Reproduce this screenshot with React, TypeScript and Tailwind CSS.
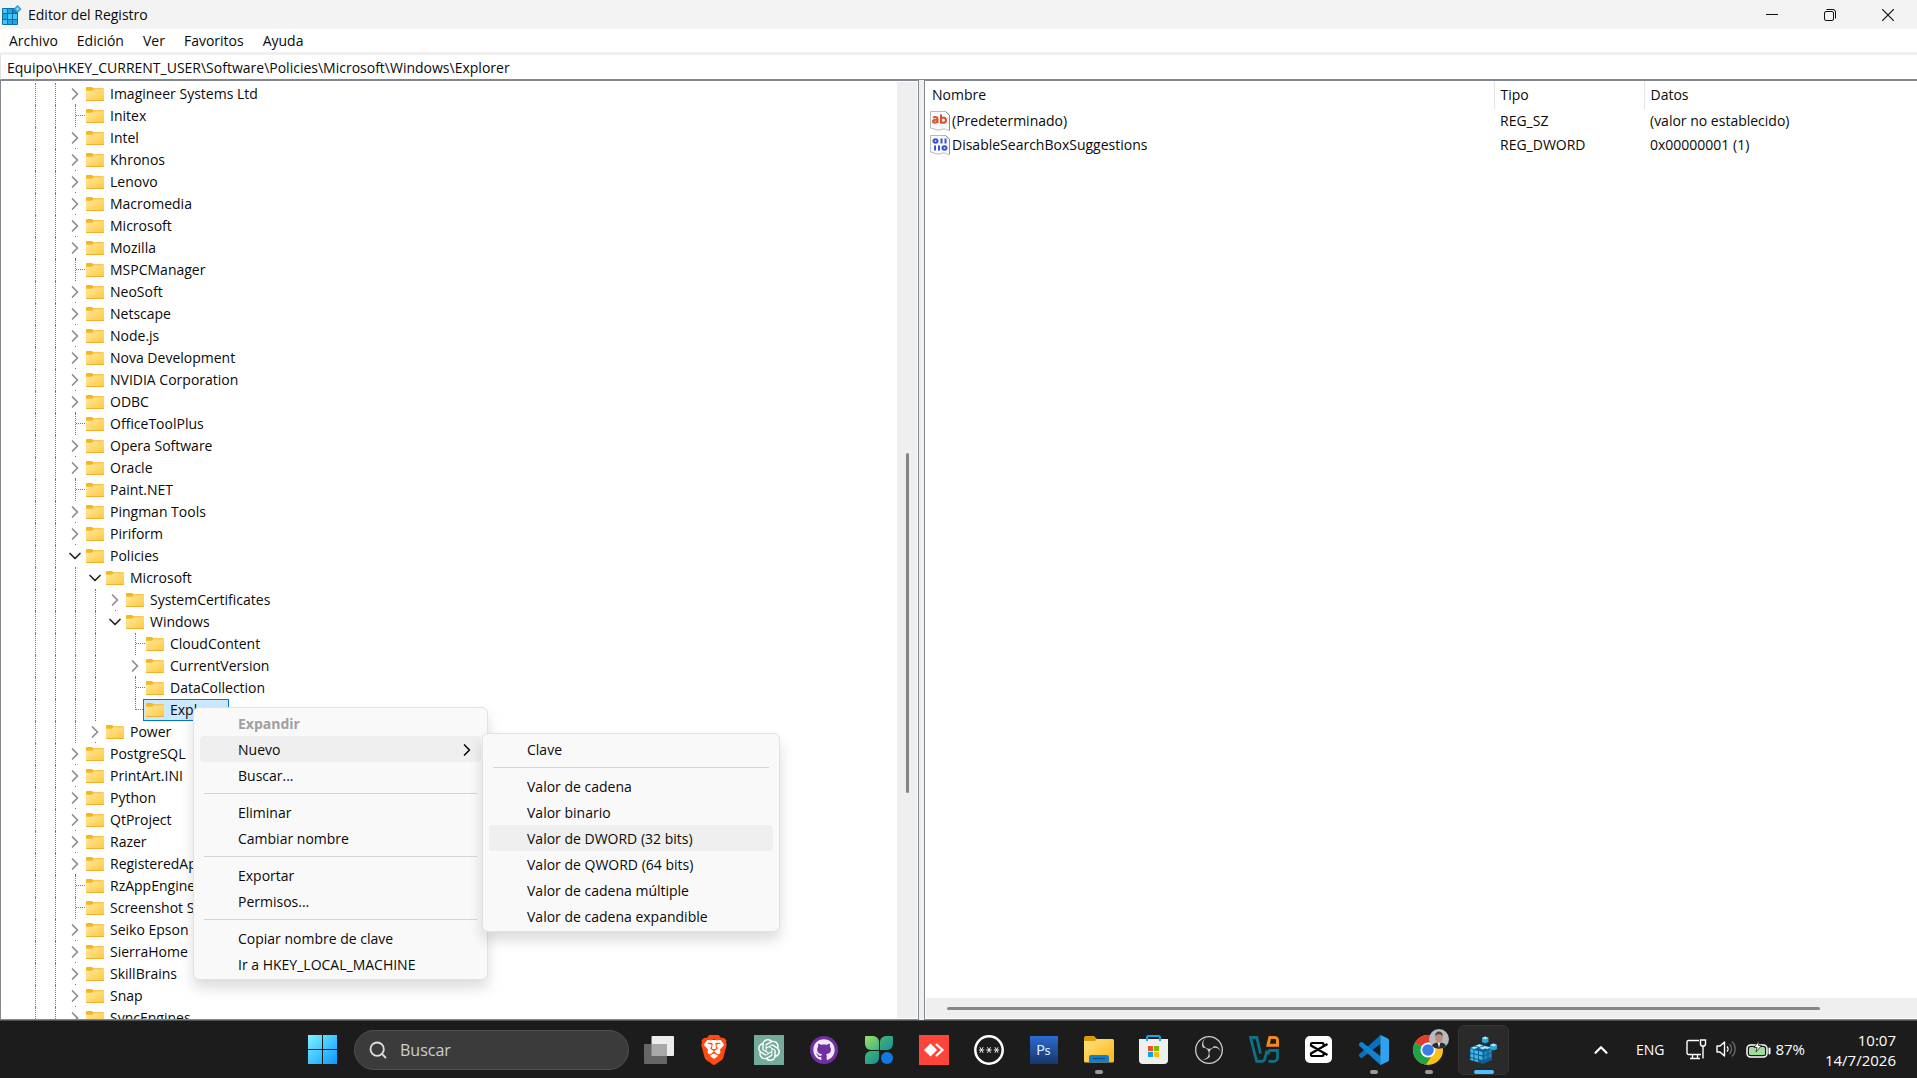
import { useState } from 'react';
import type { ReactNode } from 'react';
import { ChevronDown, ChevronRight, ChevronUp, Search } from 'lucide-react';
import { FaGithub } from 'react-icons/fa';
import { SiBrave, SiObsstudio, SiOpenai } from 'react-icons/si';

type TreeNode = { guides: string; name: string; selected?: boolean };

// guides: one character per indent column
//   | line, space nothing, > closed, v open, + leaf, L last leaf
const nodes: TreeNode[] = [
  { guides: '||>', name: 'Imagineer Systems Ltd' },
  { guides: '||+', name: 'Initex' },
  { guides: '||>', name: 'Intel' },
  { guides: '||>', name: 'Khronos' },
  { guides: '||>', name: 'Lenovo' },
  { guides: '||>', name: 'Macromedia' },
  { guides: '||>', name: 'Microsoft' },
  { guides: '||>', name: 'Mozilla' },
  { guides: '||+', name: 'MSPCManager' },
  { guides: '||>', name: 'NeoSoft' },
  { guides: '||>', name: 'Netscape' },
  { guides: '||>', name: 'Node.js' },
  { guides: '||>', name: 'Nova Development' },
  { guides: '||>', name: 'NVIDIA Corporation' },
  { guides: '||>', name: 'ODBC' },
  { guides: '||+', name: 'OfficeToolPlus' },
  { guides: '||>', name: 'Opera Software' },
  { guides: '||>', name: 'Oracle' },
  { guides: '||+', name: 'Paint.NET' },
  { guides: '||>', name: 'Pingman Tools' },
  { guides: '||>', name: 'Piriform' },
  { guides: '||v', name: 'Policies' },
  { guides: '|||v', name: 'Microsoft' },
  { guides: '||||>', name: 'SystemCertificates' },
  { guides: '||||v', name: 'Windows' },
  { guides: '|||| +', name: 'CloudContent' },
  { guides: '|||| >', name: 'CurrentVersion' },
  { guides: '|||| +', name: 'DataCollection' },
  { guides: '|||| L', name: 'Explorer', selected: true },
  { guides: '|||>', name: 'Power' },
  { guides: '||>', name: 'PostgreSQL' },
  { guides: '||>', name: 'PrintArt.INI' },
  { guides: '||>', name: 'Python' },
  { guides: '||>', name: 'QtProject' },
  { guides: '||>', name: 'Razer' },
  { guides: '||>', name: 'RegisteredApplications' },
  { guides: '||+', name: 'RzAppEngine' },
  { guides: '||+', name: 'Screenshot Studio' },
  { guides: '||>', name: 'Seiko Epson' },
  { guides: '||>', name: 'SierraHome' },
  { guides: '||>', name: 'SkillBrains' },
  { guides: '||>', name: 'Snap' },
  { guides: '||>', name: 'SyncEngines' },
];

const values = [
  { kind: 'string', name: '(Predeterminado)', type: 'REG_SZ', data: '(valor no establecido)' },
  { kind: 'binary', name: 'DisableSearchBoxSuggestions', type: 'REG_DWORD', data: '0x00000001 (1)' },
];

type MenuEntry = { label: string; bold?: boolean; active?: boolean; submenu?: boolean } | null;

const contextMenu: MenuEntry[] = [
  { label: 'Expandir', bold: true },
  { label: 'Nuevo', active: true, submenu: true },
  { label: 'Buscar...' },
  null,
  { label: 'Eliminar' },
  { label: 'Cambiar nombre' },
  null,
  { label: 'Exportar' },
  { label: 'Permisos...' },
  null,
  { label: 'Copiar nombre de clave' },
  { label: 'Ir a HKEY_LOCAL_MACHINE' },
];

const newMenu: MenuEntry[] = [
  { label: 'Clave' },
  null,
  { label: 'Valor de cadena' },
  { label: 'Valor binario' },
  { label: 'Valor de DWORD (32 bits)', active: true },
  { label: 'Valor de QWORD (64 bits)' },
  { label: 'Valor de cadena múltiple' },
  { label: 'Valor de cadena expandible' },
];

function FolderIcon() {
  return (
    <svg width="18" height="16" viewBox="0 0 18 16" className="shrink-0" aria-hidden="true">
      <defs>
        <linearGradient id="folder" x1="0" y1="0" x2="1" y2="1">
          <stop offset="0" stopColor="#ffe8a0" />
          <stop offset="1" stopColor="#ffc83c" />
        </linearGradient>
      </defs>
      <path d="M0 2a1 1 0 0 1 1-1h5l1.500 1.300H17a1 1 0 0 1 1 1V7H0z" fill="#f7b61c" />
      <path d="M0 4.800h6l1.500-1.500H18V14a1 1 0 0 1-1 1H1a1 1 0 0 1-1-1z" fill="url(#folder)" />
      <path d="M0 14h18a1 1 0 0 1-1 1H1a1 1 0 0 1-1-1z" fill="#efb02a" />
    </svg>
  );
}

function ValueIcon({ kind }: { kind: string }) {
  return (
    <svg width="20" height="20" viewBox="0 0 20 20" className="shrink-0" aria-hidden="true">
      <path d="M.5.5h15.500l3.500 3.500v15.500c-3 0-3-1.500-5.500-1.500s-3 1-6 1-3.500-1.500-7.500-2z" fill="#fafafa" stroke="#b9b9b9" />
      <path d="M15.500.5l4 4v14.500" fill="none" stroke="#8d8d8d" />
      {kind === 'string' ? (
        <g fill="none" stroke="#d9502e" strokeWidth="2">
          <path d="M3 6.500c3-1 4.500-.5 4.500 1.500v4M7.500 9c-3-.5-4.500 0-4.500 1.500s3.500 1.500 4.500 0" />
          <path d="M11 3.500v9M11 8c1-2 5-2 5 1.200S12 12.500 11 10.500" />
        </g>
      ) : (
        <g fill="none" stroke="#3553d8" strokeWidth="2">
          <ellipse cx="5.500" cy="6" rx="2" ry="1.700" />
          <path d="M11.500 3.500v5M15.500 3.500v5M5 10.500v5M9 10.500v5" />
          <ellipse cx="14.500" cy="13" rx="2" ry="1.700" />
        </g>
      )}
    </svg>
  );
}

function Guide({ kind }: { kind: string }) {
  if (kind === '>' || kind === 'v') {
    return (
      <span className="flex h-full w-5 flex-col">
        <button aria-label={kind === 'v' ? 'Contraer' : 'Expandir'} className="flex h-[21px] items-center">
          {kind === 'v' ? (
            <ChevronDown size={20} strokeWidth={2} className="text-[#222]" />
          ) : (
            <ChevronRight size={20} strokeWidth={2} className="text-[#8a8a8a]" />
          )}
        </button>
        {kind === '>' && <span className="ml-[10px] h-px w-px bg-[#777]" />}
      </span>
    );
  }
  return (
    <span className="flex h-full w-5 pl-[10px]">
      {kind !== ' ' && (
        <span className={`border-l border-dotted border-[#777] ${kind === 'L' ? 'h-1/2' : 'h-full'}`} />
      )}
      {(kind === '+' || kind === 'L') && (
        <span className="h-1/2 grow border-b border-dotted border-[#777]" />
      )}
    </span>
  );
}

function Tree() {
  return (
    <ul role="tree" aria-label="Claves" className="min-w-0 flex-1 overflow-hidden pt-[2px] pl-6">
      {nodes.map((node, i) => (
        <li key={i} role="treeitem" aria-selected={!!node.selected} className="flex h-[22px] items-center whitespace-nowrap">
          {node.guides.split('').map((kind, k) => (
            <Guide key={k} kind={kind} />
          ))}
          <span
            className={`flex h-full items-center gap-[6px] ${
              node.selected ? '-ml-[2px] border border-[#0078d7] bg-[#cce8ff] pr-[3px] pl-[2px]' : 'pl-px'
            }`}
          >
            <FolderIcon />
            {node.name}
          </span>
        </li>
      ))}
    </ul>
  );
}

function Menu({ entries, className, label }: { entries: MenuEntry[]; className: string; label: string }) {
  return (
    <div
      role="menu"
      aria-label={label}
      className={`absolute flex flex-col rounded-md border border-[#e2e2e2] bg-[#f9f9f9] px-[6px] py-[2px] shadow-[0_8px_14px_rgba(0,0,0,0.14)] ${className}`}
    >
      {entries.map((entry, i) =>
        entry ? (
          <button
            key={i}
            role="menuitem"
            disabled={entry.bold}
            className={`flex h-[26px] items-center justify-between rounded pt-[2px] pr-[4px] pl-[38px] ${
              entry.bold ? 'font-bold text-[#a0a0a0]' : ''
            } ${entry.active ? 'bg-[#efefef]' : ''}`}
          >
            {entry.label}
            {entry.submenu && <ChevronRight size={20} strokeWidth={2} />}
          </button>
        ) : (
          <hr key={i} className="mx-1 my-[5px] border-[#d5d5d5]" />
        )
      )}
    </div>
  );
}

function RegeditIcon() {
  return (
    <svg width="20" height="20" viewBox="0 0 20 20" aria-hidden="true">
      <rect x="0" y="3" width="16" height="17" rx="1" fill="#0f6fae" />
      <path d="M1 4h4v4H1zM6 9h4v5H6zM11 9h4v5h-4zM1 15h4v4H1z" fill="#45c6f5" />
      <path d="M6 4h4v4H6zM1 9h4v5H1zM6 15h4v4H6zM11 15h4v4h-4z" fill="#1fa5e6" />
      <path d="M11 4h3v4h-3z" fill="#0d86cf" />
      <path d="M15.500 0l4 4-4 4-4-4z" fill="#2b9bd3" />
      <path d="M15.500 2l2 2-2 2-2-2z" fill="#7bdcff" />
    </svg>
  );
}

function TitleBar() {
  return (
    <header className="flex h-[29px] shrink-0 items-center bg-[#f3f3f3] pl-[2px]">
      <RegeditIcon />
      <h1 className="pl-[6px]">Editor del Registro</h1>
      <div className="ml-auto flex h-full">
        <button aria-label="Minimizar" className="flex w-[58px] items-center justify-center">
          <svg width="12" height="12" viewBox="0 0 12 12"><path d="M0 5.500h12" stroke="#111" /></svg>
        </button>
        <button aria-label="Restaurar" className="flex w-[58px] items-center justify-center">
          <svg width="12" height="12" viewBox="0 0 12 12" fill="none" stroke="#111">
            <rect x=".5" y="2.500" width="9" height="9" rx="1.500" />
            <path d="M2.500.5H9a2.500 2.500 0 0 1 2.500 2.500v6.500" />
          </svg>
        </button>
        <button aria-label="Cerrar" className="flex w-[58px] items-center justify-center">
          <svg width="12" height="12" viewBox="0 0 12 12"><path d="M0 0l12 12M12 0L0 12" stroke="#111" strokeWidth="1.200" /></svg>
        </button>
      </div>
    </header>
  );
}

function ValueList() {
  return (
    <table className="w-full table-fixed text-left">
      <colgroup>
        <col className="w-[569px]" />
        <col className="w-[150px]" />
        <col />
      </colgroup>
      <thead>
        <tr className="h-7">
          <th className="border-r border-[#e5e5e5] p-0 pl-[7px] font-normal">Nombre</th>
          <th className="border-r border-[#e5e5e5] p-0 pl-[6px] font-normal">Tipo</th>
          <th className="p-0 pl-[6px] font-normal">Datos</th>
        </tr>
      </thead>
      <tbody>
        {values.map((v) => (
          <tr key={v.name} className="h-6">
            <td className="p-0 pl-[5px]">
              <span className="flex items-center gap-[2px]">
                <ValueIcon kind={v.kind} />
                {v.name}
              </span>
            </td>
            <td className="p-0 pl-[6px]">{v.type}</td>
            <td className="p-0 pl-[6px]">{v.data}</td>
          </tr>
        ))}
      </tbody>
    </table>
  );
}

function WindowsLogo() {
  return (
    <svg width="29" height="29" viewBox="0 0 29 29" aria-hidden="true">
      <defs>
        <linearGradient id="win" gradientUnits="userSpaceOnUse" x1="0" y1="0" x2="29" y2="29">
          <stop offset="0" stopColor="#7df3ff" />
          <stop offset="1" stopColor="#0a97ff" />
        </linearGradient>
      </defs>
      <path d="M0 0h14v14H0zM15 0h14v14H15zM0 15h14v14H0zM15 15h14v14H15z" fill="url(#win)" />
    </svg>
  );
}

function TaskViewIcon() {
  return (
    <svg width="30" height="28" viewBox="0 0 30 28" aria-hidden="true">
      <rect x="7.500" y="0" width="22.500" height="20" rx="1" fill="#ececec" />
      <rect x="0" y="8" width="23" height="20" rx="1" fill="#666" />
      <path d="M7.500 8H23v12H7.500z" fill="#a9a9a9" />
    </svg>
  );
}

function BraveIcon() {
  return (
    <svg width="30" height="30" viewBox="0 0 24 24" aria-hidden="true">
      <path d="M6 4h12l3 4-3 10-6 4-6-4L3 8z" fill="#fff" />
      <SiBrave size={24} color="#ff4a12" />
    </svg>
  );
}

function ChatGptIcon() {
  return (
    <span className="flex h-[30px] w-[30px] items-center justify-center bg-[#74aa9c]">
      <SiOpenai size={22} color="#fff" />
    </span>
  );
}

function GitHubIcon() {
  return (
    <span className="flex h-7 w-7 items-center justify-center rounded-full bg-[#7130a2]">
      <FaGithub size={22} color="#efe9f5" />
    </span>
  );
}

function CloverIcon() {
  return (
    <svg width="28" height="28" viewBox="0 0 28 28" aria-hidden="true">
      <defs>
        <linearGradient id="leafA" x1="0" y1="0" x2="1" y2="1">
          <stop offset="0" stopColor="#a5dc62" />
          <stop offset="1" stopColor="#37b58b" />
        </linearGradient>
        <linearGradient id="leafB" x1="0" y1="0" x2="1" y2="1">
          <stop offset="0" stopColor="#45b66b" />
          <stop offset="1" stopColor="#178f9c" />
        </linearGradient>
      </defs>
      <path d="M0 1a1 1 0 0 1 1-1h7a6 6 0 0 1 6 6v8H6a6 6 0 0 1-6-6z" fill="url(#leafA)" />
      <path d="M28 1a1 1 0 0 0-1-1h-6a6 6 0 0 0-6 6v8h7a6 6 0 0 0 6-6z" fill="url(#leafB)" />
      <path d="M0 27a1 1 0 0 0 1 1h7a6 6 0 0 0 6-6v-7H6a6 6 0 0 0-6 6z" fill="url(#leafB)" />
      <circle cx="22" cy="22" r="6" fill="#1279e0" />
    </svg>
  );
}

function AnyDeskIcon() {
  return (
    <svg width="30" height="30" viewBox="0 0 30 30" aria-hidden="true">
      <path d="M0 0h30v30H0z" fill="#ff4539" />
      <path d="M11.500 8.500l6.500 6.500-6.500 6.500L5 15z" fill="#fff" />
      <path d="M17 9l6.500 6-6.500 6" fill="none" stroke="#fff" strokeWidth="2.200" />
    </svg>
  );
}

function AsterisksIcon() {
  return (
    <svg width="30" height="30" viewBox="0 0 30 30" fill="none" stroke="#fff" aria-hidden="true">
      <circle cx="15" cy="15" r="13.700" strokeWidth="2.500" />
      {[7.5, 15, 22.5].map((x) => (
        <path key={x} d={`M${x - 2.7} 15h5.400M${x - 1.6} 12.200l3.200 5.600M${x + 1.6} 12.200l-3.200 5.600`} strokeWidth=".9" />
      ))}
    </svg>
  );
}

function PhotoshopIcon() {
  return (
    <span className="flex h-7 w-7 items-center justify-center bg-linear-to-b from-[#2d6cd0] to-[#17356b] font-['Lato',sans-serif] text-sm text-[#dcebff]">
      Ps
    </span>
  );
}

function ExplorerIcon() {
  return (
    <svg width="30" height="27" viewBox="0 0 30 27" aria-hidden="true">
      <defs>
        <linearGradient id="expl" x1="0" y1="0" x2="1" y2="1">
          <stop offset="0" stopColor="#ffe083" />
          <stop offset="1" stopColor="#fcb911" />
        </linearGradient>
      </defs>
      <path d="M0 2a2 2 0 0 1 2-2h8l3 3v6H0z" fill="#dc9a08" />
      <path d="M0 5h11l2-2h15.500a1.500 1.500 0 0 1 1.500 1.500V25a1.500 1.500 0 0 1-1.500 1.500h-27A1.500 1.500 0 0 1 0 25z" fill="url(#expl)" />
      <path d="M5 26.500V21a2 2 0 0 1 2-2h16a2 2 0 0 1 2 2v5.500z" fill="#107fcf" />
      <path d="M9 22.500h12" stroke="#084f92" strokeWidth="1.200" />
    </svg>
  );
}

function StoreIcon() {
  return (
    <svg width="29" height="29" viewBox="0 0 29 29" aria-hidden="true">
      <path d="M8 6V2.500A1.500 1.500 0 0 1 9.500 1h10A1.500 1.500 0 0 1 21 2.500V6" fill="none" stroke="#1ba3e8" strokeWidth="2" />
      <path d="M0 4h29v21a4 4 0 0 1-4 4H4a4 4 0 0 1-4-4z" fill="#efefef" />
      <path d="M7 4h2v2H7zM20 4h2v2h-2z" fill="#1ba3e8" />
      <path d="M9 11h5v5H9z" fill="#f25022" />
      <path d="M15 11h5v5h-5z" fill="#7fba00" />
      <path d="M9 17h5v5H9z" fill="#00a4ef" />
      <path d="M15 17h5v5h-5z" fill="#ffb900" />
    </svg>
  );
}

function ObsIcon() {
  return (
    <span className="flex h-7 w-7 items-center justify-center rounded-full bg-[#201f20]">
      <SiObsstudio size={28} color="#cfcfcf" />
    </span>
  );
}

function VmIcon() {
  return (
    <svg width="30" height="27" viewBox="0 0 30 27" fill="none" aria-hidden="true">
      <path
        d="M11.500 17.500L7.800 1.500H1.500l6.200 23.800h5.300c1.500 0 2.300-.8 2.700-2.300L18 14.500M19.500 18.500v-4M28.500 13v9a3.300 3.300 0 0 1-3.300 3.300H19.500M19.500 14.500h9"
        stroke="#0d7285"
        strokeWidth="2.800"
      />
      <path d="M19 9.200l1.800-7.700h5a2.700 2.700 0 0 1 2.700 2.700v5z" stroke="#f08a1c" strokeWidth="3" />
    </svg>
  );
}

function CapCutIcon() {
  return (
    <svg width="27" height="27" viewBox="0 0 27 27" aria-hidden="true">
      <rect width="27" height="27" rx="5" fill="#fff" />
      <path d="M22.500 8L6 17.500V19a1 1 0 0 0 1 1h10.500a1 1 0 0 0 1-1v-1.500M22.500 19L6 9.500V8a1 1 0 0 1 1-1h10.500a1 1 0 0 1 1 1v1.500" fill="none" stroke="#000" strokeWidth="2.200" />
    </svg>
  );
}

function VsCodeIcon() {
  return (
    <svg width="30" height="30" viewBox="0 0 30 30" aria-hidden="true">
      <path d="M21.500 0L0 19.500c-.5.500-.5 1.300 0 1.800l1.700 1.500c.5.400 1.100.4 1.600 0L22 8.500z" fill="#0a6fc0" />
      <path d="M21.500 30L0 10.500C-.5 10-.5 9.200 0 8.700l1.700-1.500c.5-.4 1.100-.4 1.600 0L22 21.500z" fill="#1480d0" />
      <path d="M21.500 0l7 3.200A2.500 2.500 0 0 1 30 5.500v19a2.500 2.500 0 0 1-1.500 2.300l-7 3.200c-.8-.3-.3-.8-.1-1.500V1.500z" fill="#31a3ee" />
    </svg>
  );
}

function ChromeIcon() {
  return (
    <svg width="36" height="36" viewBox="0 0 36 36" className="mb-[6px] ml-[5px]" aria-hidden="true">
      <circle cx="15" cy="21" r="15" fill="#fbc116" />
      <path d="M15 21L2 13.500a15 15 0 0 0 11 22.300l7.500-12z" fill="#1ea446" />
      <path d="M15 21L2 13.500A15 15 0 0 1 28 13.500H15z" fill="#e33b2e" />
      <circle cx="15" cy="21" r="7.500" fill="#fff" />
      <circle cx="15" cy="21" r="5.800" fill="#3a7cec" />
      <circle cx="26" cy="10" r="10" fill="#b9babd" />
      <path d="M19 17c1-3 4-3.500 7-3.500s6 .5 7 3.500a10 10 0 0 1-14 0z" fill="#2b2c33" />
      <path d="M24.500 13h3l-1.500 6z" fill="#eee" />
      <ellipse cx="26" cy="8.500" rx="3.800" ry="5.300" fill="#b98f80" />
      <path d="M22 7c0-6 8-6 8 0-2-2.500-6-2.500-8 0z" fill="#4a403c" />
    </svg>
  );
}

function RegeditCubeIcon() {
  return (
    <svg width="27" height="28" viewBox="0 0 27 28" aria-hidden="true">
      <path d="M0 12l9-4 13 3v13l-9 4-13-4z" fill="#0e5f92" />
      <path d="M.5 12l3.500-1.500 4 1-3.500 1.500zM5 10l4-1.700 4 1L9.500 11zM9 12l3.500-1.500 4 1L13 13.500zM14 10l7 1.500-3.500 1.500-4-1z" fill="#a4e8fb" />
      <path d="M.5 13l3 .8v3.400l-3-.8zM4.500 14l3.500 1v3.400l-3.500-1zM9 15l3.500 1v3.200L9 18.400zM.5 17.500l3 .8v3.400l-3-.8zM4.500 18.600l3.500 1V23l-3.500-1zM9 19.700l3.500 1V24L9 23zM.5 22l3 .8v2l-3-.9zM4.500 23.100l3.500 1v2l-3.500-1z" fill="#41b9e6" />
      <path d="M14 16l3.500-1.500V18L14 19.500zM18.500 14l3-1.300v3.500l-3 1.300zM14 20.500l3.500-1.500v3.500L14 24zM18.500 18.500l3-1.300v3.500l-3 1.300z" fill="#1d86bd" />
      <path d="M12 2l3-1.500L18.500 2v4L15 7.500 12 6z" fill="#2aa5da" />
      <path d="M12 2l3-1.500L18.500 2 15 3.500z" fill="#a4e8fb" />
      <path d="M20 9l3.500-1.500L27 9v4l-3.500 1.500L20 13z" fill="#2aa5da" />
      <path d="M20 9l3.500-1.500L27 9l-3.500 1.500z" fill="#a4e8fb" />
    </svg>
  );
}

type TaskItem = { label: string; icon: ReactNode; running?: boolean; active?: boolean };

const apps: TaskItem[] = [
  { label: 'Vista de tareas', icon: <TaskViewIcon /> },
  { label: 'Brave', icon: <BraveIcon /> },
  { label: 'ChatGPT', icon: <ChatGptIcon /> },
  { label: 'GitHub Desktop', icon: <GitHubIcon /> },
  { label: 'Hojas', icon: <CloverIcon /> },
  { label: 'AnyDesk', icon: <AnyDeskIcon /> },
  { label: 'Contraseñas', icon: <AsterisksIcon /> },
  { label: 'Photoshop', icon: <PhotoshopIcon /> },
  { label: 'Explorador de archivos', icon: <ExplorerIcon />, running: true },
  { label: 'Microsoft Store', icon: <StoreIcon /> },
  { label: 'OBS Studio', icon: <ObsIcon /> },
  { label: 'Máquinas virtuales', icon: <VmIcon /> },
  { label: 'CapCut', icon: <CapCutIcon /> },
  { label: 'Visual Studio Code', icon: <VsCodeIcon />, running: true },
  { label: 'Chrome', icon: <ChromeIcon />, running: true },
  { label: 'Editor del Registro', icon: <RegeditCubeIcon />, active: true },
];

function Tray() {
  return (
    <div className="ml-auto flex items-center pr-[21px] text-white">
      <button aria-label="Mostrar iconos ocultos" className="mr-6">
        <ChevronUp size={22} strokeWidth={2.4} />
      </button>
      <button className="mr-[22px]">ENG</button>
      <button aria-label="Red, volumen y batería" className="mr-5 flex items-center text-[15px]">
        <svg width="21" height="21" viewBox="0 0 21 21" fill="none" stroke="#fff" strokeWidth="1.400" className="mr-[9px]">
          <path d="M13 1.500H2.500a1.500 1.500 0 0 0-1.500 1.500v11A1.500 1.500 0 0 0 2.500 15.500H15M6.500 16v3.500M11.500 16v3.500M4 19.500h10" />
          <path d="M14.500 1h5v4.500l-1 1.500h-3l-1-1.500zM17 7v12.500" />
        </svg>
        <svg width="21" height="18" viewBox="0 0 21 18" fill="none" stroke="#fff" strokeWidth="1.400" strokeLinejoin="round" className="mr-[9px]">
          <path d="M1 6v6h3l4.500 4V2L4 6zM11 6.500c1.300 1.300 1.300 3.700 0 5" />
          <path d="M13.500 4c2.700 2.700 2.700 7.300 0 10M16 1.500c4.200 4 4.200 11 0 15" stroke="#666" />
        </svg>
        <svg width="25" height="17" viewBox="0 0 25 17" fill="none" className="mr-[4px]">
          <rect x="1" y="4" width="20" height="12" rx="3.500" stroke="#fff" strokeWidth="1.500" />
          <rect x="3" y="6" width="16" height="8" rx="1.500" fill="#9fdc9a" />
          <path d="M23.500 7.500v5" stroke="#fff" strokeWidth="2" strokeLinecap="round" />
          <path d="M13 0L8 6.500h3L10 11l5.500-6.500h-3z" fill="#fff" stroke="#1c1c1c" strokeWidth=".8" />
        </svg>
        87%
      </button>
      <button className="text-right text-[15px] leading-5">
        10:07
        <br />
        14/7/2026
      </button>
    </div>
  );
}

function Taskbar() {
  return (
    <footer className="flex h-[58px] shrink-0 items-center border-t border-[#4b4f53] bg-[#1c1c1c] pl-[295px]">
      <button aria-label="Inicio" className="mr-[5px] flex w-[54px] justify-center">
        <WindowsLogo />
      </button>
      <label className="mr-[2px] flex h-10 w-[275px] items-center gap-[12px] rounded-full border border-[#505050] bg-[#3b3b3b] pl-[13px]">
        <Search size={20} strokeWidth={2.2} className="shrink-0 text-[#dedede]" />
        <input
          aria-label="Buscar"
          placeholder="Buscar"
          className="w-full min-w-0 bg-transparent text-base outline-none placeholder:text-[#cfcfcf]"
        />
      </label>
      {apps.map((app) => (
        <button
          key={app.label}
          aria-label={app.label}
          className={`relative mx-[2px] flex h-[50px] w-[51px] items-center justify-center rounded-md border ${
            app.active ? 'border-[#353535] bg-[#2a2a2a]' : 'border-transparent'
          }`}
        >
          {app.icon}
          {app.running && <span className="absolute bottom-0 h-1 w-2 rounded-full bg-[#9a9a9a]" />}
          {app.active && <span className="absolute bottom-0 h-1 w-5 rounded-full bg-[#4cc2ff]" />}
        </button>
      ))}
      <Tray />
    </footer>
  );
}

export default function App() {
  const [path, setPath] = useState('Equipo\\HKEY_CURRENT_USER\\Software\\Policies\\Microsoft\\Windows\\Explorer');

  return (
    <div className="relative flex h-screen flex-col overflow-hidden bg-[#f0f0f0] font-['Open_Sans','Noto_Sans',sans-serif] text-sm text-[#0a0a0a]">
      <TitleBar />

      <nav className="flex h-[23px] shrink-0 items-center gap-px bg-white">
        {['Archivo', 'Edición', 'Ver', 'Favoritos', 'Ayuda'].map((item) => (
          <button key={item} className="px-[9px] pt-px">
            {item}
          </button>
        ))}
      </nav>

      <input
        aria-label="Ruta de la clave"
        value={path}
        onChange={(e) => setPath(e.target.value)}
        className="mt-[3px] h-[25px] shrink-0 border-b border-l border-b-[#828790] border-l-[#e0e0e0] bg-white pl-[6px] outline-none"
      />

      <main className="grid min-h-0 flex-1 grid-cols-[919fr_5px_993fr] grid-rows-[minmax(0,1fr)]">
        <section className="flex min-w-0 border border-[#828790] bg-white pr-px">
          <Tree />
          <div className="my-px flex w-5 flex-col items-center bg-[#efefef]">
            <div className="grow-[371]" />
            <div className="w-[3px] grow-[340] rounded-full bg-[#868686]" />
            <div className="grow-[225]" />
          </div>
        </section>
        <div className="cursor-col-resize" />
        <section className="flex min-w-0 flex-col border border-r-0 border-[#828790] bg-white">
          <div className="flex-1">
            <ValueList />
          </div>
          <div className="mb-px ml-px flex h-5 items-center bg-[#efefef] pr-[97px] pl-[21px]">
            <div className="h-[3px] w-full rounded-full bg-[#868686]" />
          </div>
        </section>
      </main>

      <Taskbar />

      <Menu label="Menú contextual" entries={contextMenu} className="top-[707px] left-[193px] w-[295px]" />
      <Menu label="Nuevo" entries={newMenu} className="top-[733px] left-[482px] w-[298px]" />
    </div>
  );
}
